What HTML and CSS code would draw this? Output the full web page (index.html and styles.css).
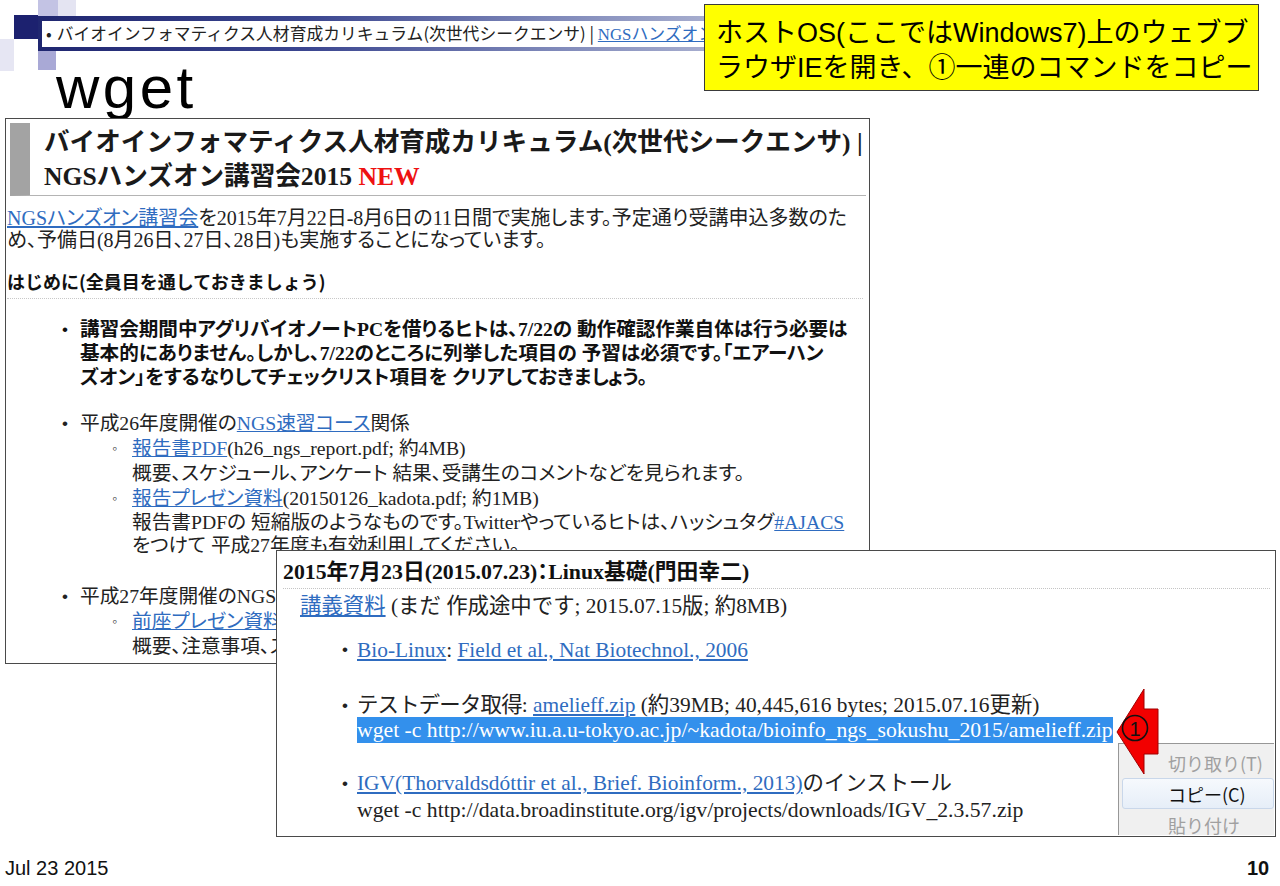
FILE: index.html
```html
<!DOCTYPE html>
<html lang="ja">
<head>
<meta charset="utf-8">
<title>wget</title>
<link rel="stylesheet" href="styles.css">
</head>
<body>
<div class="slide">
  <div class="deco deco-navy"></div>
  <div class="deco deco-lav1"></div>
  <div class="deco deco-lav2"></div>
  <div class="deco deco-lav3"></div>
  <div class="deco deco-pale"></div>

  <div class="topbar">
    <div class="strip"><span class="strip-bul">•</span>バイオインフォマティクス人材育成カリキュラム(次世代シークエンサ) | <a class="strip-link">NGSハンズオン講習会2015</a></div>
  </div>

  <h1 class="title">wget</h1>

  <div class="callout">ホストOS(ここではWindows7)上のウェブブ<br>ラウザIEを開き、①一連のコマンドをコピー</div>

  <div class="shot shot1">
    <div class="s1-head">バイオインフォマティクス人材育成カリキュラム(次世代シークエンサ) |<br>NGSハンズオン講習会2015 <span class="new">NEW</span></div>
    <p class="s1-para"><a class="lnk">NGSハンズオン講習会</a>を2015年7月22日-8月6日の11日間で実施します。予定通り受講申込多数のた<br>め、予備日(8月26日、27日、28日)も実施することになっています。</p>
    <div class="s1-sec">はじめに(全員目を通しておきましょう)</div>
    <div class="row row-bold">
      <span class="bul">•</span>
      <div class="row-body">講習会期間中アグリバイオノートPCを借りるヒトは、7/22の 動作確認作業自体は行う必要は<br>基本的にありません。しかし、7/22のところに列挙した項目の 予習は必須です。「エアーハン<br>ズオン」をするなりしてチェックリスト項目を クリアしておきましょう。</div>
    </div>
    <div class="row row-r1">
      <span class="bul">•</span>
      <div class="row-body">平成26年度開催の<a class="lnk">NGS速習コース</a>関係
        <div class="sub"><span class="sbul">◦</span><div class="sub-body"><a class="lnk">報告書PDF</a>(h26_ngs_report.pdf; 約4MB)<br>概要、スケジュール、アンケート 結果、受講生のコメントなどを見られます。</div></div>
        <div class="sub"><span class="sbul">◦</span><div class="sub-body"><a class="lnk">報告プレゼン資料</a>(20150126_kadota.pdf; 約1MB)<div class="desc">報告書PDFの 短縮版のようなものです。Twitterやっているヒトは、ハッシュタグ<a class="lnk">#AJACS</a><br>をつけて 平成27年度も有効利用してください。</div></div></div>
      </div>
    </div>
    <div class="row row-r2">
      <span class="bul">•</span>
      <div class="row-body">平成27年度開催のNGS速習コース関係
        <div class="sub"><span class="sbul">◦</span><div class="sub-body"><a class="lnk">前座プレゼン資料</a>(20150722_kadota.pdf)<br>概要、注意事項、スケジュールなど</div></div>
      </div>
    </div>
  </div>

  <div class="shot shot2">
    <div class="s2-head">2015年7月23日(2015.07.23)：Linux基礎(門田幸二)</div>
    <div class="s2-mat"><a class="lnk">講義資料</a> (まだ 作成途中です; 2015.07.15版; 約8MB)</div>
    <div class="row2 r2a">
      <span class="bul2">•</span>
      <div class="row2-body"><a class="lnk">Bio-Linux</a>: <a class="lnk">Field et al., Nat Biotechnol., 2006</a></div>
    </div>
    <div class="row2 r2b">
      <span class="bul2">•</span>
      <div class="row2-body"><span class="jp">テストデータ取得</span>: <a class="lnk">amelieff.zip</a> (約39MB; 40,445,616 bytes; 2015.07.16更新)<br><span class="sel">wget -c http://www.iu.a.u-tokyo.ac.jp/~kadota/bioinfo_ngs_sokushu_2015/amelieff.zip</span></div>
    </div>
    <div class="row2 r2c">
      <span class="bul2">•</span>
      <div class="row2-body"><a class="lnk">IGV(Thorvaldsdóttir et al., Brief. Bioinform., 2013)</a>のインストール<br><span class="cmd">wget -c http://data.broadinstitute.org/igv/projects/downloads/IGV_2.3.57.zip</span></div>
    </div>
  </div>

  <div class="menu">
    <div class="mi mi-dis">切り取り(T)</div>
    <div class="mi mi-hot">コピー(C)</div>
    <div class="mi mi-dis">貼り付け</div>
  </div>

  <svg class="arrow" width="50" height="92" viewBox="0 0 50 92">
    <polygon points="4,45 31,2 31,22 45,22 45,67 31,67 31,87" fill="#f20000" stroke="#a00000" stroke-width="1"/>
    <circle cx="22" cy="41" r="12.5" fill="none" stroke="#111" stroke-width="1.6"/>
    <text x="22" y="49" text-anchor="middle" class="arrow-num">1</text>
  </svg>

  <div class="foot-date">Jul 23 2015</div>
  <div class="foot-page">10</div>
</div>
</body>
</html>
```

FILE: styles.css
```css
* { box-sizing: border-box; }
html, body { margin: 0; padding: 0; background: #fff; }
.slide {
  position: relative;
  width: 1280px;
  height: 886px;
  overflow: hidden;
  background: #fff;
  font-family: "Liberation Sans", "Noto Sans CJK JP", sans-serif;
  color: #000;
}
a { text-decoration: underline; }

/* decorative squares */
.deco { position: absolute; }
.deco-navy { left: 14px; top: 15px; width: 24px; height: 24px; background: #1c216f; z-index: 2; }
.deco-lav1 { left: 38px; top: 0; width: 20px; height: 17px; background: #c3c3e4; }
.deco-lav2 { left: 58px; top: 0; width: 18px; height: 17px; background: #e4e4f2; }
.deco-lav3 { left: 38px; top: 50px; width: 18px; height: 20px; background: #a9a9d6; }
.deco-pale { left: 0; top: 39px; width: 14px; height: 32px; background: #e6e6f3; }

.topbar {
  position: absolute;
  left: 38px;
  top: 16px;
  width: 672px;
  height: 35px;
  padding: 5px 0 4px 4px;
  background: linear-gradient(to right, #1f2670 0%, #3b4690 40%, #7c86b8 75%, #a7aecf 100%);
}
.strip {
  height: 26px;
  background: #fff;
  font-family: "Noto Sans CJK JP", sans-serif;
  font-size: 16.8px;
  line-height: 24px;
  color: #222;
  white-space: nowrap;
  overflow: hidden;
  padding-left: 4px;
}
.strip-bul { margin-right: 5px; }
.strip-link { font-family: "Liberation Serif", "Noto Sans CJK JP", serif; color: #2f6cc0; }

.title {
  position: absolute;
  left: 56px;
  top: 55px;
  margin: 0;
  font-family: "Liberation Sans", sans-serif;
  font-weight: normal;
  font-size: 60px;
  line-height: 66px;
  letter-spacing: 3.5px;
  color: #000;
}

.callout {
  position: absolute;
  left: 704px;
  top: 4px;
  width: 555px;
  height: 87px;
  background: #ffff00;
  border: 1px solid #3a3a3a;
  padding: 11px 0 0 11px;
  font-size: 27px;
  line-height: 35px;
  color: #000;
  white-space: nowrap;
  z-index: 5;
}

/* screenshots */
.shot {
  position: absolute;
  background: #fff;
  border: 1px solid #4a4a4a;
  overflow: hidden;
  font-family: "Liberation Serif", "Noto Sans CJK JP", serif;
  color: #222;
  white-space: nowrap;
}
.lnk { color: #2f6cc0; }
.shot1 { left: 5px; top: 118px; width: 865px; height: 546px; z-index: 1; }
.s1-head {
  margin: 4px 3px 0 4px;
  border-left: 20px solid #a3a3a3;
  border-bottom: 1px solid #b4b4b4;
  padding: 3px 0 1px 14px;
  font-weight: bold;
  font-size: 25.6px;
  line-height: 34px;
  color: #1a1a1a;
}
.new { color: #ee1111; font-family: "Liberation Serif", serif; }
.s1-para {
  margin: 11px 0 0 1px;
  font-size: 20px;
  line-height: 22px;
  font-feature-settings: "palt" 1;
}
.s1-sec {
  margin: 18px 6px 0 1px;
  padding-bottom: 5px;
  border-bottom: 1px dotted #c8c8c8;
  font-family: "Noto Sans CJK JP", sans-serif;
  font-weight: bold;
  font-size: 18px;
  line-height: 24px;
  color: #111;
}
.row { display: flex; align-items: flex-start; font-size: 19.7px; font-feature-settings: "palt" 1; }
.bul { width: 18px; margin-left: 56px; flex: none; font-family: "Liberation Sans", sans-serif; font-size: 17px; }
.row-bold { margin-top: 19px; font-weight: bold; line-height: 24px; color: #111; font-size: 19.6px; }
.row-bold .bul { font-weight: normal; }
.row-r1 { margin-top: 21px; line-height: 25px; }
.row-r2 { margin-top: 27px; line-height: 25px; }
.sub { display: flex; align-items: flex-start; }
.sbul { width: 20px; margin-left: 32px; flex: none; font-size: 14px; color: #333; }
.desc { line-height: 23px; }

.shot2 { left: 276px; top: 550px; width: 1000px; height: 287px; z-index: 3; font-size: 21.4px; }
.s2-head {
  margin: 0 5px 0 6px;
  padding-top: 8px;
  padding-bottom: 3px;
  border-bottom: 1px dotted #c4c4c4;
  font-weight: bold;
  font-size: 21.8px;
  line-height: 26px;
  color: #111;
  font-feature-settings: "palt" 1;
}
.s2-mat { margin: 4px 0 0 23px; line-height: 26px; }
.row2 { display: flex; align-items: flex-start; line-height: 26px; }
.bul2 { width: 15px; margin-left: 65px; flex: none; font-family: "Liberation Sans", sans-serif; font-size: 17px; }
.r2a { margin-top: 18px; }
.r2b { margin-top: 30px; line-height: 25px; }
.r2c { margin-top: 27px; line-height: 27px; }
.jp { letter-spacing: -0.8px; }
.sel { background: #3390ec; color: #fff; padding: 1px 0; font-size: 21.7px; }
.cmd { color: #222; font-size: 21.7px; }

.menu {
  position: absolute;
  left: 1118px;
  top: 743px;
  width: 156px;
  height: 92px;
  background: #f0f0f0;
  border-left: 1px solid #979797;
  border-top: 1px solid #979797;
  padding: 3px 0 0 3px;
  z-index: 4;
  font-family: "Noto Sans CJK JP", sans-serif;
  font-size: 18px;
  overflow: hidden;
}
.mi { height: 31px; line-height: 30px; padding-left: 45px; color: #222; white-space: nowrap; border: 1px solid transparent; }
.mi-dis { color: #a0a0a0; }
.mi-hot {
  border: 1px solid #c9d7ea;
  border-radius: 3px;
  background: linear-gradient(#f6f9fd, #e6eef8);
  color: #111;
}

.arrow { position: absolute; left: 1113px; top: 687px; z-index: 6; }
.arrow-num { font-family: "Liberation Sans", sans-serif; font-size: 20px; fill: #111; }

.foot-date {
  position: absolute;
  left: 5px;
  top: 857px;
  font-size: 20px;
  line-height: 22px;
  color: #111;
}
.foot-page {
  position: absolute;
  left: 1247px;
  top: 857px;
  font-size: 20px;
  line-height: 22px;
  font-weight: bold;
  color: #111;
}
```
